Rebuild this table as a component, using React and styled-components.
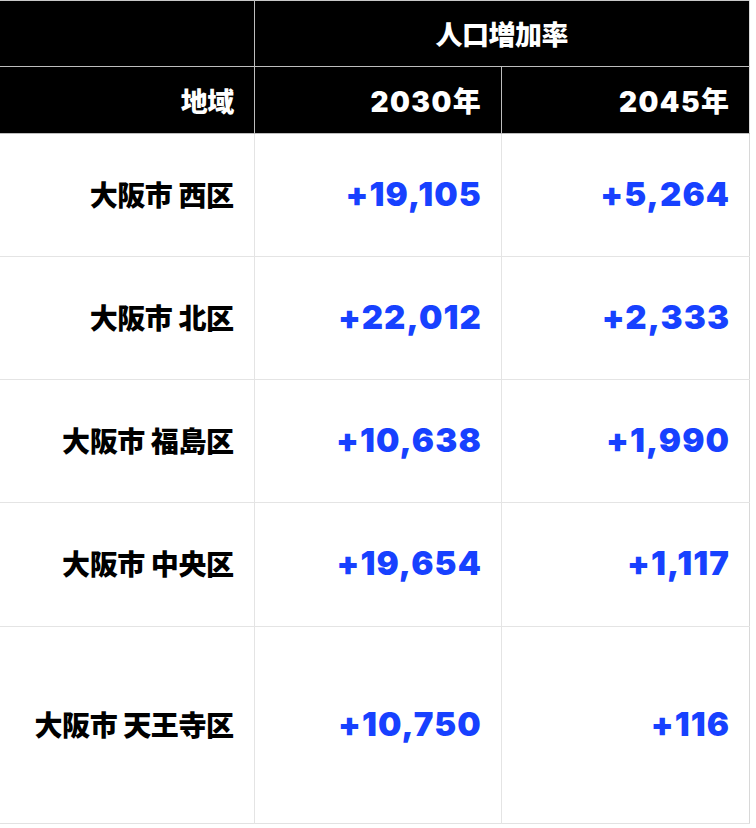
import React from "react";
import styled, { createGlobalStyle } from "styled-components";

const GlobalStyle = createGlobalStyle`
  html, body {
    margin: 0;
    padding: 0;
    background: #ffffff;
  }
  body {
    font-family: "Noto Sans CJK JP", "Inter", sans-serif;
  }
`;

const Table = styled.table`
  width: 750px;
  border-collapse: collapse;
  table-layout: fixed;
  border-top: 1px solid #c8c8c8;
  border-right: 1px solid #d8d8d8;
  border-bottom: 1px solid #e2e2e2;
`;

const HeadCell = styled.th`
  background: #000000;
  color: #ffffff;
  height: ${(p) => p.h}px;
  padding: 0 ${(p) => (p.align === "center" ? 0 : 20)}px 0 0;
  text-align: ${(p) => p.align || "right"};
  font-family: "Inter", "Noto Sans CJK JP", sans-serif;
  font-size: 27px;
  font-weight: 900;
  letter-spacing: -0.5px;
  border-left: 1px solid #bdbdbd;
  border-bottom: 1px solid #bdbdbd;
  &:first-child {
    border-left: none;
  }
`;

const Year = styled.span`
  font-size: 28px;
  letter-spacing: 1.4px;
  margin-right: -1.4px;
`;

const Cell = styled.td`
  height: ${(p) => p.h}px;
  padding: 0 20px 3px 0;
  text-align: right;
  vertical-align: middle;
  border-left: 1px solid #e4e4e4;
  border-top: 1px solid #e4e4e4;
  &:first-child {
    border-left: none;
  }
`;

const Area = styled.span`
  font-family: "Noto Sans CJK JP", sans-serif;
  font-size: 28px;
  font-weight: 900;
  color: #000000;
  letter-spacing: -0.4px;
`;

const Num = styled.span`
  font-family: "Inter", sans-serif;
  font-size: 33px;
  font-weight: 900;
  color: #1741ff;
  letter-spacing: 1.1px;
  margin-right: -1.1px;
`;

const rows = [
  { area: "大阪市 西区", a: "+19,105", b: "+5,264", h: 119 },
  { area: "大阪市 北区", a: "+22,012", b: "+2,333", h: 119 },
  { area: "大阪市 福島区", a: "+10,638", b: "+1,990", h: 119 },
  { area: "大阪市 中央区", a: "+19,654", b: "+1,117", h: 120 },
  { area: "大阪市 天王寺区", a: "+10,750", b: "+116", h: 193 },
];

export default function App() {
  return (
    <>
      <GlobalStyle />
      <Table>
        <colgroup>
          <col style={{ width: 254 }} />
          <col style={{ width: 247 }} />
          <col style={{ width: 248 }} />
        </colgroup>
        <thead>
          <tr>
            <HeadCell h={65}></HeadCell>
            <HeadCell h={65} colSpan={2} align="center">
              人口増加率
            </HeadCell>
          </tr>
          <tr>
            <HeadCell h={66}>地域</HeadCell>
            <HeadCell h={66}>
              <Year>2030年</Year>
            </HeadCell>
            <HeadCell h={66}>
              <Year>2045年</Year>
            </HeadCell>
          </tr>
        </thead>
        <tbody>
          {rows.map((r) => (
            <tr key={r.area}>
              <Cell h={r.h}>
                <Area>{r.area}</Area>
              </Cell>
              <Cell h={r.h}>
                <Num>{r.a}</Num>
              </Cell>
              <Cell h={r.h}>
                <Num>{r.b}</Num>
              </Cell>
            </tr>
          ))}
        </tbody>
      </Table>
    </>
  );
}
